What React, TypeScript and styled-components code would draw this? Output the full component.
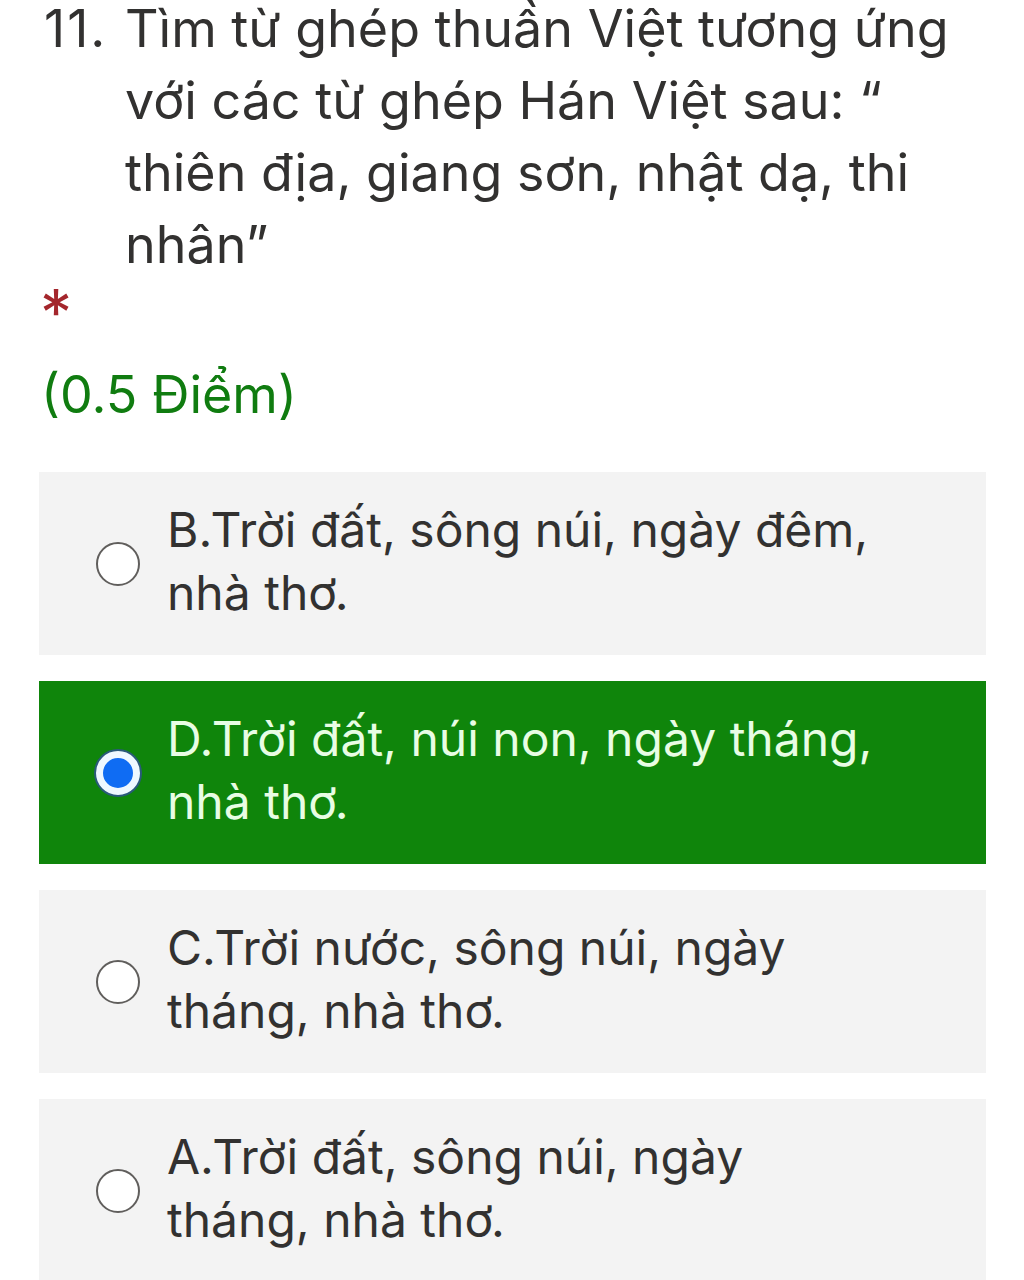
import React from 'react'
import styled, { createGlobalStyle } from 'styled-components'

const GlobalStyle = createGlobalStyle`
    html, body {
        margin: 0;
        padding: 0;
        background: #ffffff;
    }
    body {
        font-family: Inter, Roboto, "Noto Sans", "Liberation Sans", sans-serif;
        color: #323130;
    }
`;

const Page = styled.div`
    width: 1024px;
    height: 1280px;
    overflow: hidden;
    padding: 0 38px 0 39px;
    box-sizing: border-box;
`;

const Question = styled.div`
    display: flex;
    margin-top: -7px;
    font-size: 52px;
    line-height: 72px;
    color: #323130;
`;

const Number = styled.span`
    flex: 0 0 auto;
    width: 86px;
    padding-left: 5px;
    box-sizing: border-box;
    letter-spacing: 2px;
`;

const QuestionText = styled.span`
    flex: 1;
    max-width: 850px;
`;

const Star = styled.div`
    font-size: 64px;
    line-height: 64px;
    color: #a4262c;
    padding-left: 1px;
`;

const Points = styled.div`
    margin-top: 17px;
    font-size: 52px;
    line-height: 66px;
    color: #107c10;
    padding-left: 2px;
`;

const Options = styled.div`
    margin-top: 44px;
    display: flex;
    flex-direction: column;
    gap: 26px;
`;

const Option = styled.div<{ $selected?: boolean }>`
    display: flex;
    align-items: center;
    min-height: 183px;
    padding: 0 40px 0 57px;
    box-sizing: border-box;
    background: ${p => (p.$selected ? '#0f850b' : '#f3f3f3')};
    color: ${p => (p.$selected ? '#e8fde4' : '#323130')};
`;

const Radio = styled.span<{ $selected?: boolean }>`
    flex: 0 0 auto;
    width: 44px;
    height: 44px;
    border-radius: 50%;
    box-sizing: border-box;
    margin-right: 27px;
    ${p =>
        p.$selected
            ? `
        background: #0f6cf3;
        border: 7px solid #eef8ff;
        box-shadow: 0 0 0 2px #2a5a7a;
    `
            : `
        background: #ffffff;
        border: 2px solid #605e5c;
    `}
`;

const Label = styled.span`
    max-width: 715px;
    font-size: 48px;
    line-height: 63px;
    padding-bottom: 6px;
`;

const options = [
    { text: 'B.Trời đất, sông núi, ngày đêm, nhà thơ.' },
    { text: 'D.Trời đất, núi non, ngày tháng, nhà thơ.', selected: true },
    { text: 'C.Trời nước, sông núi, ngày tháng, nhà thơ.' },
    { text: 'A.Trời đất, sông núi, ngày tháng, nhà thơ.' },
]

export default function App() {
    return (
        <>
            <GlobalStyle />
            <Page>
                <Question>
                    <Number>11.</Number>
                    <QuestionText>
                        Tìm từ ghép thuần Việt tương ứng với các từ ghép Hán Việt sau: “ thiên địa, giang sơn, nhật dạ, thi nhân”
                    </QuestionText>
                </Question>
                <Star>*</Star>
                <Points>(0.5 Điểm)</Points>
                <Options>
                    {options.map(o => (
                        <Option key={o.text} $selected={o.selected}>
                            <Radio $selected={o.selected} />
                            <Label>{o.text}</Label>
                        </Option>
                    ))}
                </Options>
            </Page>
        </>
    )
}
